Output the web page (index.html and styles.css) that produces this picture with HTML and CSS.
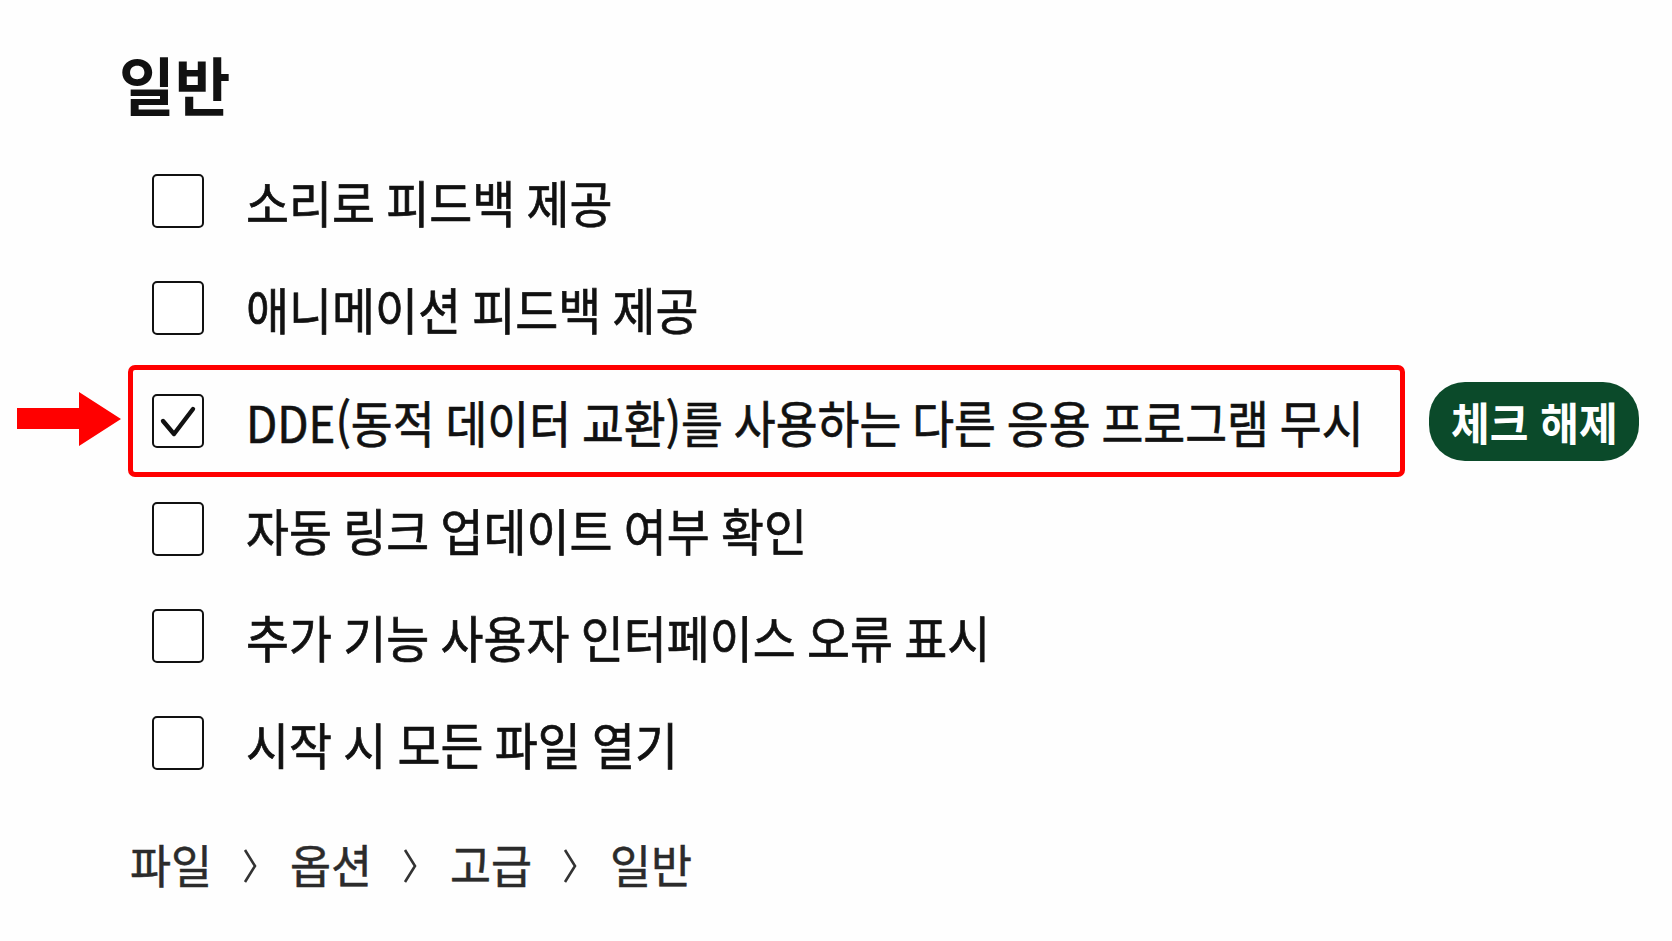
FILE: index.html
```html
<!DOCTYPE html>
<html lang="ko">
<head>
<meta charset="utf-8">
<title>일반</title>
<link rel="stylesheet" href="styles.css">
</head>
<body>
<main class="page">
  <h1 class="title"><span class="cond cond-title">일반</span></h1>
  <ul class="options">
    <li class="option">
      <span class="box"></span>
      <span class="label"><span class="cond">소리로 피드백 제공</span></span>
    </li>
    <li class="option">
      <span class="box"></span>
      <span class="label"><span class="cond">애니메이션 피드백 제공</span></span>
    </li>
    <li class="option option-hl">
      <svg class="arrow" width="105" height="54" viewBox="0 0 105 54" aria-hidden="true">
        <polygon points="1,16 63,16 63,0 105,27 63,54 63,37 1,37" fill="#f00"/>
      </svg>
      <div class="hl-box">
        <span class="box box-checked">
          <svg width="46" height="48" viewBox="0 0 46 48" aria-hidden="true">
            <polyline points="8,24 19,37 38,12" fill="none" stroke="#111" stroke-width="4.4" stroke-linecap="round" stroke-linejoin="round"/>
          </svg>
        </span>
        <span class="label"><span class="cond cond-long">DDE(동적 데이터 교환)를 사용하는 다른 응용 프로그램 무시</span></span>
      </div>
      <button class="uncheck" type="button"><span class="cond">체크 해제</span></button>
    </li>
    <li class="option">
      <span class="box"></span>
      <span class="label"><span class="cond">자동 링크 업데이트 여부 확인</span></span>
    </li>
    <li class="option">
      <span class="box"></span>
      <span class="label"><span class="cond">추가 기능 사용자 인터페이스 오류 표시</span></span>
    </li>
    <li class="option">
      <span class="box"></span>
      <span class="label"><span class="cond">시작 시 모든 파일 열기</span></span>
    </li>
  </ul>
  <nav class="crumbs">
    <span class="crumb"><span class="cond cond-crumb">파일</span></span>
    <svg class="sep" width="16" height="34" viewBox="0 0 16 34" aria-hidden="true"><polyline points="3,1 13,17 3,33" fill="none" stroke="#333" stroke-width="2.6"/></svg>
    <span class="crumb"><span class="cond cond-crumb">옵션</span></span>
    <svg class="sep" width="16" height="34" viewBox="0 0 16 34" aria-hidden="true"><polyline points="3,1 13,17 3,33" fill="none" stroke="#333" stroke-width="2.6"/></svg>
    <span class="crumb"><span class="cond cond-crumb">고급</span></span>
    <svg class="sep" width="16" height="34" viewBox="0 0 16 34" aria-hidden="true"><polyline points="3,1 13,17 3,33" fill="none" stroke="#333" stroke-width="2.6"/></svg>
    <span class="crumb"><span class="cond cond-crumb">일반</span></span>
  </nav>
</main>
</body>
</html>
```
FILE: styles.css
```css
* { box-sizing: border-box; }
html, body { margin: 0; padding: 0; background: #fefefe; }
body {
  font-family: "Noto Sans CJK KR", "Noto Sans", sans-serif;
  color: #111;
  width: 1672px;
  height: 941px;
  overflow: hidden;
}
.page {
  padding: 51px 0 0 16px;
}
.cond {
  display: inline-block;
  transform: scaleX(0.935);
  transform-origin: left center;
  white-space: nowrap;
}
.cond-title { transform: scaleX(0.96); }
.cond-crumb { transform: scaleX(0.97); }
.cond-long { transform: scaleX(0.91); }
.title {
  margin: 0 0 0 103px;
  font-size: 63px;
  line-height: 63px;
  font-weight: 700;
}
.options {
  list-style: none;
  margin: 33px 0 0;
  padding: 0;
}
.option {
  display: flex;
  align-items: center;
  height: 107px;
  padding-left: 136px;
}
.box {
  flex: none;
  width: 52px;
  height: 54px;
  border: 2.8px solid #111;
  border-radius: 5px;
  background: #fff;
  display: flex;
  align-items: center;
  justify-content: center;
}
.label {
  margin-left: 42px;
  font-size: 50px;
  line-height: 54px;
  font-weight: 400;
  word-spacing: -2px;
  -webkit-text-stroke: 0.7px #111;
  white-space: nowrap;
}
.option-hl {
  height: 112px;
  padding-left: 0;
  margin: 4px 0 -2px;
}
.arrow {
  flex: none;
  display: block;
  margin-top: -4px;
}
.hl-box {
  flex: none;
  display: flex;
  align-items: center;
  width: 1277px;
  height: 112px;
  margin-left: 7px;
  padding-left: 19px;
  border: 5px solid #f00;
  border-radius: 7px;
}
.box-checked svg { display: block; }
.uncheck {
  flex: none;
  margin-left: 24px;
  width: 210px;
  height: 79px;
  border: 0;
  border-radius: 36px;
  background: #0b4a2a;
  color: #fff;
  font-family: inherit;
  font-size: 45px;
  font-weight: 700;
  line-height: 1;
  padding: 0 0 0 22px;
  text-align: left;
}
.crumbs {
  display: flex;
  align-items: center;
  gap: 32px;
  margin: 42px 0 0 114px;
  color: #2b2b2b;
}
.crumb {
  font-size: 46px;
  line-height: 50px;
  font-weight: 400;
  -webkit-text-stroke: 0.5px #2b2b2b;
  width: 80px;
}
.sep { display: block; flex: none; margin-top: 6px; }
```
